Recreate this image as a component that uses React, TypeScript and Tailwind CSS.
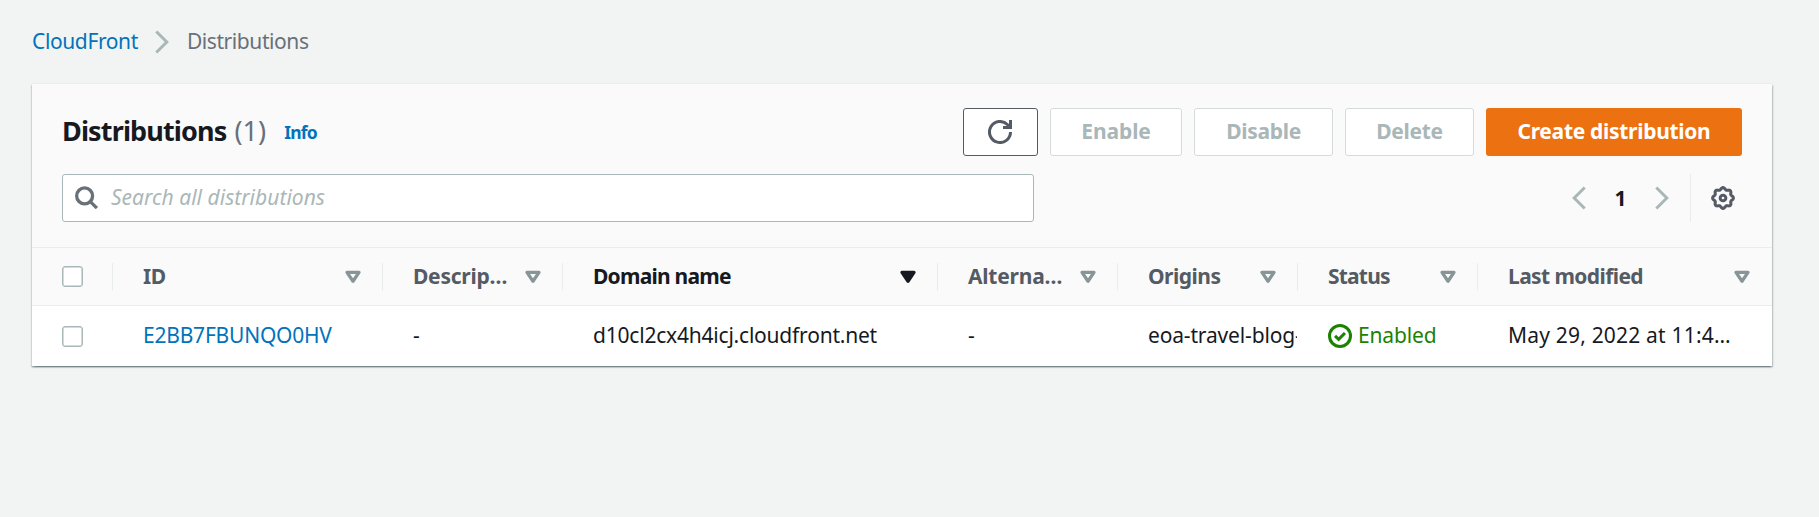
import type { ReactNode } from "react";

function Chevron({ left = false }: { left?: boolean }) {
  return (
    <svg width="24" height="24" viewBox="0 0 16 16" fill="none" stroke="#aab7b8" strokeWidth="2" className={left ? "rotate-180" : ""}>
      <path d="M4.2 1l7 7-7 7" />
    </svg>
  );
}

function SortIcon({ active = false }: { active?: boolean }) {
  return (
    <svg width="24" height="24" viewBox="0 0 16 16" fill={active ? "#16191f" : "none"} stroke={active ? "#16191f" : "#879596"} strokeWidth="2.2" strokeLinejoin="round" className="shrink-0">
      <path d="M4 4.9h8l-4 5.900z" />
    </svg>
  );
}

// Outline of an eight-toothed gear centred on (8, 8).
const gearPath =
  Array.from({ length: 96 }, (_, i) => {
    const angle = (i / 96) * Math.PI * 2;
    const radius = 6.3 + 0.65 * Math.cos(8 * angle);
    return `${i === 0 ? "M" : "L"}${(8 + radius * Math.cos(angle)).toFixed(2)} ${(8 + radius * Math.sin(angle)).toFixed(2)}`;
  }).join("") + "z";

function Checkbox() {
  return <span className="block size-[21px] rounded-[3px] border border-[#aab7b8] bg-white shadow-[inset_0_0_0_0.5px_#aab7b8]" />;
}

function DisabledButton({ className, children }: { className: string; children: ReactNode }) {
  return (
    <button className={`h-12 rounded-[3px] border border-[#d5dbdb] bg-white pb-0.5 font-bold text-[#aab7b8] ${className}`}>{children}</button>
  );
}

const grid = "grid grid-cols-[80px_270px_180px_375px_180px_180px_180px_1fr] items-center";

const columns = [
  { label: "ID", text: "tracking-[-0.3px]" },
  { label: "Descrip…", text: "tracking-[-0.25px]" },
  { label: "Domain name", text: "tracking-[-0.76px] text-[#16191f]", active: true },
  { label: "Alterna…", text: "tracking-[-0.22px]" },
  { label: "Origins", text: "tracking-[-0.5px]" },
  { label: "Status", text: "tracking-[-0.8px]" },
  { label: "Last modified", text: "tracking-[-0.6px]" },
];

export default function App() {
  return (
    <div className="h-[517px] overflow-hidden bg-[#f2f3f3] pl-8 font-['Noto_Sans',sans-serif] text-[21px] leading-[30px] text-[#16191f]">
      <nav className="flex h-[83px] items-center">
        <a className="pb-px tracking-[-0.38px] text-[#0073bb]">CloudFront</a>
        <span className="mr-[13px] ml-3"><Chevron /></span>
        <span className="pb-px tracking-[-0.42px] text-[#687078]">Distributions</span>
      </nav>

      <main className="w-[1740px] border-t border-[#eaeded] bg-white shadow-[0_1.5px_1.5px_0_rgba(0,28,36,0.3),1.5px_1.5px_1.5px_0_rgba(0,28,36,0.15),-1.5px_1.5px_1.5px_0_rgba(0,28,36,0.15)]">
        <header className="h-[164px] border-b border-[#eaeded] bg-[#fafafa] pt-6 pr-[30px] pl-[30px]">
          <div className="flex h-12 items-center">
            <h1 className="pb-[3px] text-[27px] font-bold tracking-[-0.86px]">Distributions</h1>
            <span className="ml-2 pb-[3px] text-[27px] text-[#687078]">(1)</span>
            <a className="ml-[18px] text-[17.5px] font-bold tracking-[-0.8px] text-[#0073bb]">Info</a>
            <div className="ml-auto flex gap-3">
              <button className="flex h-12 w-[75px] items-center justify-center rounded-[3px] border border-[#545b64] bg-white pr-0.5">
                <svg width="24" height="24" viewBox="0 0 16 16" fill="none" stroke="#545b64" strokeWidth="2">
                  <path d="M15 8a7 7 0 1 1-2.100-5L15 5" />
                  <path d="M15 0v5h-5" />
                </svg>
              </button>
              <DisabledButton className="w-[132px] tracking-[-0.1px]">Enable</DisabledButton>
              <DisabledButton className="w-[139px] tracking-[-0.3px]">Disable</DisabledButton>
              <DisabledButton className="w-[129px] tracking-[-0.3px]">Delete</DisabledButton>
              <button className="h-12 w-64 rounded-[3px] bg-[#ec7211] pb-0.5 font-bold tracking-[-0.3px] text-white">Create distribution</button>
            </div>
          </div>
          <div className="mt-[18px] flex h-12 items-center">
            <label className="flex h-12 w-[972px] items-center rounded-[3px] border border-[#aab7b8] bg-white pl-3">
              <svg width="24" height="24" viewBox="0 0 16 16" fill="none" stroke="#687078" strokeWidth="2.2">
                <circle cx="6.4" cy="6.6" r="5.3" />
                <path d="M10.200 10.400l4.400 4.400" />
              </svg>
              <span className="ml-3 pb-0.5 text-[#aab7b8] italic tracking-[0.02px]">Search all distributions</span>
            </label>
            <div className="ml-auto flex h-12 items-center">
              <Chevron left />
              <span className="w-[59px] text-center font-bold">1</span>
              <Chevron />
              <span className="ml-4 h-12 w-px bg-[#eaeded]" />
              <svg width="24" height="24" viewBox="0 0 16 16" fill="none" stroke="#545b64" strokeWidth="2" strokeLinejoin="round" className="mr-[7px] ml-5">
                <circle cx="8" cy="8" r="1.9" />
                <path d={gearPath} />
              </svg>
            </div>
          </div>
        </header>

        <div className={`${grid} h-[58px] border-b border-[#eaeded] bg-[#fafafa] font-bold text-[#545b64]`}>
          <div className="pl-[30px]"><Checkbox /></div>
          {columns.map((column) => (
            <div key={column.label} className="flex h-7 items-center justify-between border-l border-[#eaeded] pr-[17px] pl-[30px] last:pr-[18px]">
              <span className={`pb-0.5 ${column.text}`}>{column.label}</span>
              <SortIcon active={column.active} />
            </div>
          ))}
        </div>

        <div className={`${grid} h-[60px] whitespace-nowrap`}>
          <div className="pl-[30px]"><Checkbox /></div>
          <a className="pb-0.5 pl-[31px] tracking-[-0.22px] text-[#0073bb]">E2BB7FBUNQO0HV</a>
          <span className="pb-0.5 pl-[31px]">-</span>
          <span className="pb-0.5 pl-[31px] tracking-[-0.21px]">d10cl2cx4h4icj.cloudfront.net</span>
          <span className="pb-0.5 pl-[31px]">-</span>
          <span className="overflow-hidden pb-0.5 pl-[31px] tracking-[-0.16px]">eoa-travel-blog-</span>
          <span className="flex items-center pl-[31px] tracking-[-0.15px] text-[#1d8102]">
            <svg width="24" height="24" viewBox="0 0 16 16" fill="none" stroke="#1d8102" strokeWidth="2" className="mr-1.5">
              <circle cx="8" cy="8" r="7" />
              <path d="M4.700 7.900l2.400 2.300L11.300 6" />
            </svg>
            <span className="pb-0.5">Enabled</span>
          </span>
          <span className="pb-0.5 pl-[31px] tracking-[0.19px]">May 29, 2022 at 11:4…</span>
        </div>
      </main>
    </div>
  );
}
